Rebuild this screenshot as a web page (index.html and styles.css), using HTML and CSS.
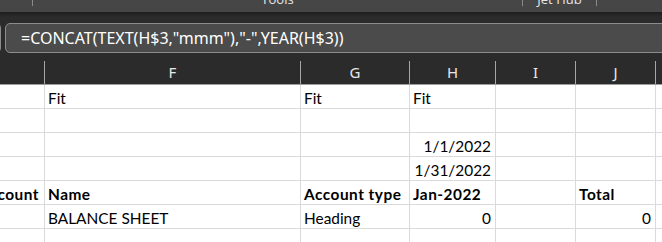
FILE: index.html
```html
<!DOCTYPE html>
<html>
<head>
<meta charset="utf-8">
<link rel="stylesheet" href="styles.css">
</head>
<body>
<div class="app">
  <div class="ribbon">
    <div class="group g0"></div>
    <div class="group g1"><span class="label">Tools</span></div>
    <div class="group g2"><span class="label">Jet Hub</span></div>
  </div>
  <div class="gap"></div>
  <div class="fbar">
    <div class="namebox"></div>
    <div class="formula">=CONCAT(TEXT(H$3,"mmm"),"-",YEAR(H$3))</div>
  </div>
  <div class="colheads">
    <div class="ch ce"></div>
    <div class="ch cf">F</div>
    <div class="ch cg">G</div>
    <div class="ch chh">H</div>
    <div class="ch ci">I</div>
    <div class="ch cj">J</div>
    <div class="ch ck"></div>
  </div>
  <div class="grid">
    <div class="row">
      <div class="c ce"></div><div class="c cf">Fit</div><div class="c cg">Fit</div><div class="c chh">Fit</div><div class="c ci"></div><div class="c cj"></div><div class="c ck"></div>
    </div>
    <div class="row">
      <div class="c ce"></div><div class="c cf"></div><div class="c cg"></div><div class="c chh"></div><div class="c ci"></div><div class="c cj"></div><div class="c ck"></div>
    </div>
    <div class="row">
      <div class="c ce"></div><div class="c cf"></div><div class="c cg"></div><div class="c chh num">1/1/2022</div><div class="c ci"></div><div class="c cj"></div><div class="c ck"></div>
    </div>
    <div class="row">
      <div class="c ce"></div><div class="c cf"></div><div class="c cg"></div><div class="c chh num">1/31/2022</div><div class="c ci"></div><div class="c cj"></div><div class="c ck"></div>
    </div>
    <div class="row bold">
      <div class="c ce clip"><span>Account</span></div><div class="c cf">Name</div><div class="c cg over">Account type</div><div class="c chh">Jan-2022</div><div class="c ci"></div><div class="c cj">Total</div><div class="c ck"></div>
    </div>
    <div class="row">
      <div class="c ce"></div><div class="c cf">BALANCE SHEET</div><div class="c cg">Heading</div><div class="c chh num">0</div><div class="c ci"></div><div class="c cj num">0</div><div class="c ck"></div>
    </div>
    <div class="row">
      <div class="c ce"></div><div class="c cf"></div><div class="c cg"></div><div class="c chh"></div><div class="c ci"></div><div class="c cj"></div><div class="c ck"></div>
    </div>
  </div>
</div>
</body>
</html>
```
FILE: styles.css
```css
html, body {
  margin: 0;
  padding: 0;
  background: #2b2b2b;
}
.app {
  width: 662px;
  height: 242px;
  overflow: hidden;
  background: #2b2b2b;
}
.ribbon {
  height: 12px;
  background: #464646;
  display: flex;
  overflow: hidden;
}
.group {
  height: 6px;
  border-right: 1px solid #8a8a8a;
  display: flex;
  justify-content: center;
}
.g0 { width: 32px; }
.g1 { width: 489px; }
.g2 { width: 73px; }
.label {
  font-family: "Open Sans", sans-serif;
  font-size: 13px;
  line-height: 14px;
  color: #e6e6e6;
  margin-top: -8px;
  white-space: nowrap;
}
.gap {
  height: 11px;
  background: linear-gradient(#1e1e1e, #2b2b2b 5px);
}
.fbar {
  height: 30px;
  display: flex;
  gap: 4px;
}
.namebox {
  margin-left: -6px;
  width: 7px;
  border: 1px solid #8c8c8c;
  border-left: none;
  border-radius: 0 5px 5px 0;
  background: #4b4b4b;
  box-sizing: border-box;
}
.formula {
  flex: 1;
  margin-right: -10px;
  box-sizing: border-box;
  border: 1px solid #8c8c8c;
  border-radius: 5px;
  background: #4b4b4b;
  color: #ffffff;
  font-family: "Noto Sans", sans-serif;
  font-size: 16px;
  line-height: 28px;
  padding-left: 15px;
  white-space: nowrap;
}
.colheads {
  margin-top: 8px;
  height: 23px;
  display: flex;
  border-bottom: 1px solid #9e9e9e;
}
.ch {
  box-sizing: border-box;
  border-right: 1px solid #a6a6a6;
  color: #e8e8e8;
  font-family: "Noto Sans", sans-serif;
  font-size: 15px;
  line-height: 22px;
  text-align: center;
  flex: none;
}
.ce { width: 45px; }
.cf { width: 256px; }
.cg { width: 109px; }
.chh { width: 86px; }
.ci { width: 80px; }
.cj { width: 80px; }
.ck { width: 60px; border-right: none; }
.grid {
  background: #ffffff;
}
.row {
  display: flex;
  height: 24px;
}
.c {
  box-sizing: border-box;
  flex: none;
  height: 24px;
  border-right: 1px solid #dadada;
  border-bottom: 1px solid #dadada;
  font-family: Lato, "Liberation Sans", sans-serif;
  font-size: 15.4px;
  line-height: 27px;
  padding: 0 3px 0 3px;
  color: #000;
  white-space: nowrap;
  overflow: hidden;
}
.c.ck { border-right: none; }
.num { text-align: right; padding-right: 4px; }
.bold .c { font-weight: bold; letter-spacing: 0.5px; }
.clip {
  display: flex;
  justify-content: flex-end;
  padding-right: 5px;
}
.over { overflow: visible; }
```
